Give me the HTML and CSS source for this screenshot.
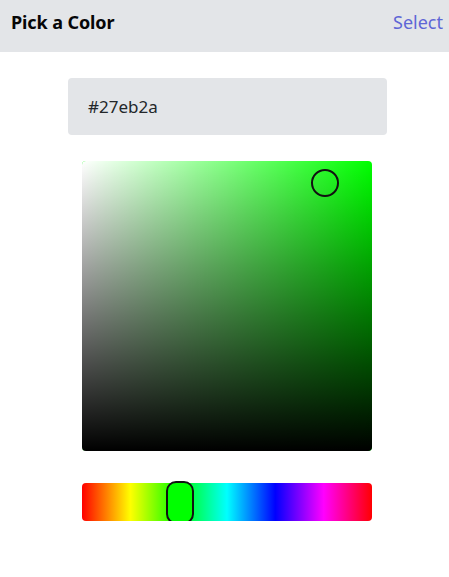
FILE: index.html
```html
<!DOCTYPE html>
<html>
<head>
<meta charset="utf-8">
<link rel="stylesheet" href="styles.css">
</head>
<body>
<div class="header">
  <div class="title">Pick a Color</div>
  <div class="select">Select</div>
</div>
<div class="content">
  <div class="hex-input">#27eb2a</div>
  <div class="sv-square">
    <div class="sv-white"></div>
    <div class="sv-black"></div>
    <div class="sv-handle"></div>
  </div>
  <div class="hue-bar">
    <div class="hue-thumb"></div>
  </div>
</div>
</body>
</html>
```
FILE: styles.css
```css
html, body {
  margin: 0;
  padding: 0;
  background: #ffffff;
  font-family: "Noto Sans", "Open Sans", sans-serif;
}
.header {
  height: 52px;
  box-sizing: border-box;
  background: #e3e5e8;
  display: flex;
  justify-content: space-between;
  align-items: center;
  padding: 0 6px 8px 11px;
}
.title {
  font-size: 18px;
  font-weight: 700;
  color: #060607;
  letter-spacing: -0.1px;
}
.select {
  font-size: 18px;
  font-weight: 400;
  color: #5e66d6;
}
.content {
  display: flex;
  flex-direction: column;
  padding-top: 26px;
}
.hex-input {
  margin-left: 68px;
  width: 319px;
  height: 57px;
  box-sizing: border-box;
  background: #e3e5e8;
  border-radius: 4px;
  display: flex;
  align-items: center;
  padding-left: 20px;
  font-size: 17px;
  color: #23272a;
}
.sv-square {
  position: relative;
  margin-top: 26px;
  margin-left: 82px;
  width: 290px;
  height: 290px;
  border-radius: 4px;
  overflow: hidden;
  background: #00ff00;
}
.sv-white {
  position: absolute;
  inset: 0;
  background: linear-gradient(to right, #ffffff, rgba(255,255,255,0));
}
.sv-black {
  position: absolute;
  inset: 0;
  background: linear-gradient(to bottom, rgba(0,0,0,0), #000000);
}
.sv-handle {
  position: absolute;
  left: 229px;
  top: 8px;
  width: 28px;
  height: 28px;
  box-sizing: border-box;
  border: 2.5px solid #111111;
  border-radius: 50%;
}
.hue-bar {
  position: relative;
  margin-top: 32px;
  margin-left: 82px;
  width: 290px;
  height: 38px;
  border-radius: 4px;
  background: linear-gradient(to right, #ff0000 0%, #ffff00 16.67%, #00ff00 33.33%, #00ffff 50%, #0000ff 66.67%, #ff00ff 83.33%, #ff0000 100%);
}
.hue-thumb {
  position: absolute;
  left: 84px;
  top: -2px;
  width: 28px;
  height: 43px;
  box-sizing: border-box;
  border: 2.5px solid #111111;
  border-radius: 10px;
  background: #00ff00;
}
```
